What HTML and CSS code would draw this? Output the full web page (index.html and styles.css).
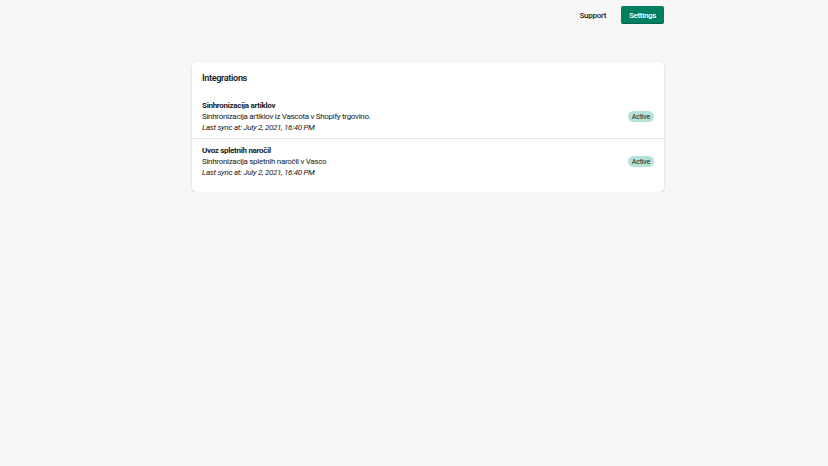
FILE: index.html
```html
<!DOCTYPE html>
<html lang="sl">
<head>
<meta charset="utf-8">
<title>Integrations</title>
<link rel="stylesheet" href="styles.css">
</head>
<body>
<div class="page">
  <header class="topbar">
    <a class="link-btn">Support</a>
    <a class="primary-btn">Settings</a>
  </header>
  <section class="card">
    <h2 class="card-title">Integrations</h2>
    <ul class="list">
      <li class="item">
        <div class="item-text">
          <div class="item-title">Sinhronizacija artiklov</div>
          <div class="item-desc">Sinhronizacija artiklov iz Vascota v Shopify trgovino.</div>
          <div class="item-sync">Last sync at: July 2, 2021, 16:40 PM</div>
        </div>
        <span class="badge">Active</span>
      </li>
      <li class="item">
        <div class="item-text">
          <div class="item-title">Uvoz spletnih naročil</div>
          <div class="item-desc">Sinhronizacija spletnih naročil v Vasco</div>
          <div class="item-sync">Last sync at: July 2, 2021, 16:40 PM</div>
        </div>
        <span class="badge">Active</span>
      </li>
    </ul>
  </section>
</div>
</body>
</html>
```
FILE: styles.css
```css
* { box-sizing: border-box; }
html, body {
  margin: 0;
  padding: 0;
  background: #f6f6f7;
  font-family: Roboto, "Noto Sans", "Liberation Sans", sans-serif;
  color: #202223;
  font-size: 8px;
  letter-spacing: -0.3px;
  line-height: 11px;
}
.page {
  width: 472px;
  margin-left: calc(50% - 222px);
  padding-top: 6px;
}
.topbar {
  display: flex;
  justify-content: flex-end;
  align-items: center;
  gap: 15px;
  height: 18px;
}
.link-btn {
  font-weight: 500;
  color: #202223;
}
.primary-btn {
  display: flex;
  align-items: center;
  justify-content: center;
  width: 43px;
  height: 18px;
  background: #008060;
  color: #fff;
  border-radius: 2px;
  font-weight: 500;
  box-shadow: inset 0 -1px 0 rgba(0,0,0,0.2);
}
.card {
  margin-top: 38px;
  background: #fff;
  border-radius: 5px;
  box-shadow: 0 0 2px rgba(23,24,24,0.08), 0 1px 2px rgba(0,0,0,0.15);
  padding: 10px 0 9px;
}
.card-title {
  margin: 0;
  padding: 0 10px;
  font-size: 9.1px;
  letter-spacing: -0.35px;
  line-height: 12px;
  font-weight: 600;
}
.list {
  list-style: none;
  margin: 10px 0 0;
  padding: 0;
}
.item {
  display: flex;
  align-items: center;
  justify-content: space-between;
  padding: 5.5px 10px;
}
.item + .item {
  border-top: 1px solid #e1e3e5;
}
.item-title { font-weight: 700; }
.item-sync { font-style: italic; }
.badge {
  background: #b4e2d8;
  border-radius: 6px;
  padding: 0 4px;
  line-height: 11px;
  font-size: 7.2px;
  letter-spacing: -0.25px;
  color: #202223;
}
```
